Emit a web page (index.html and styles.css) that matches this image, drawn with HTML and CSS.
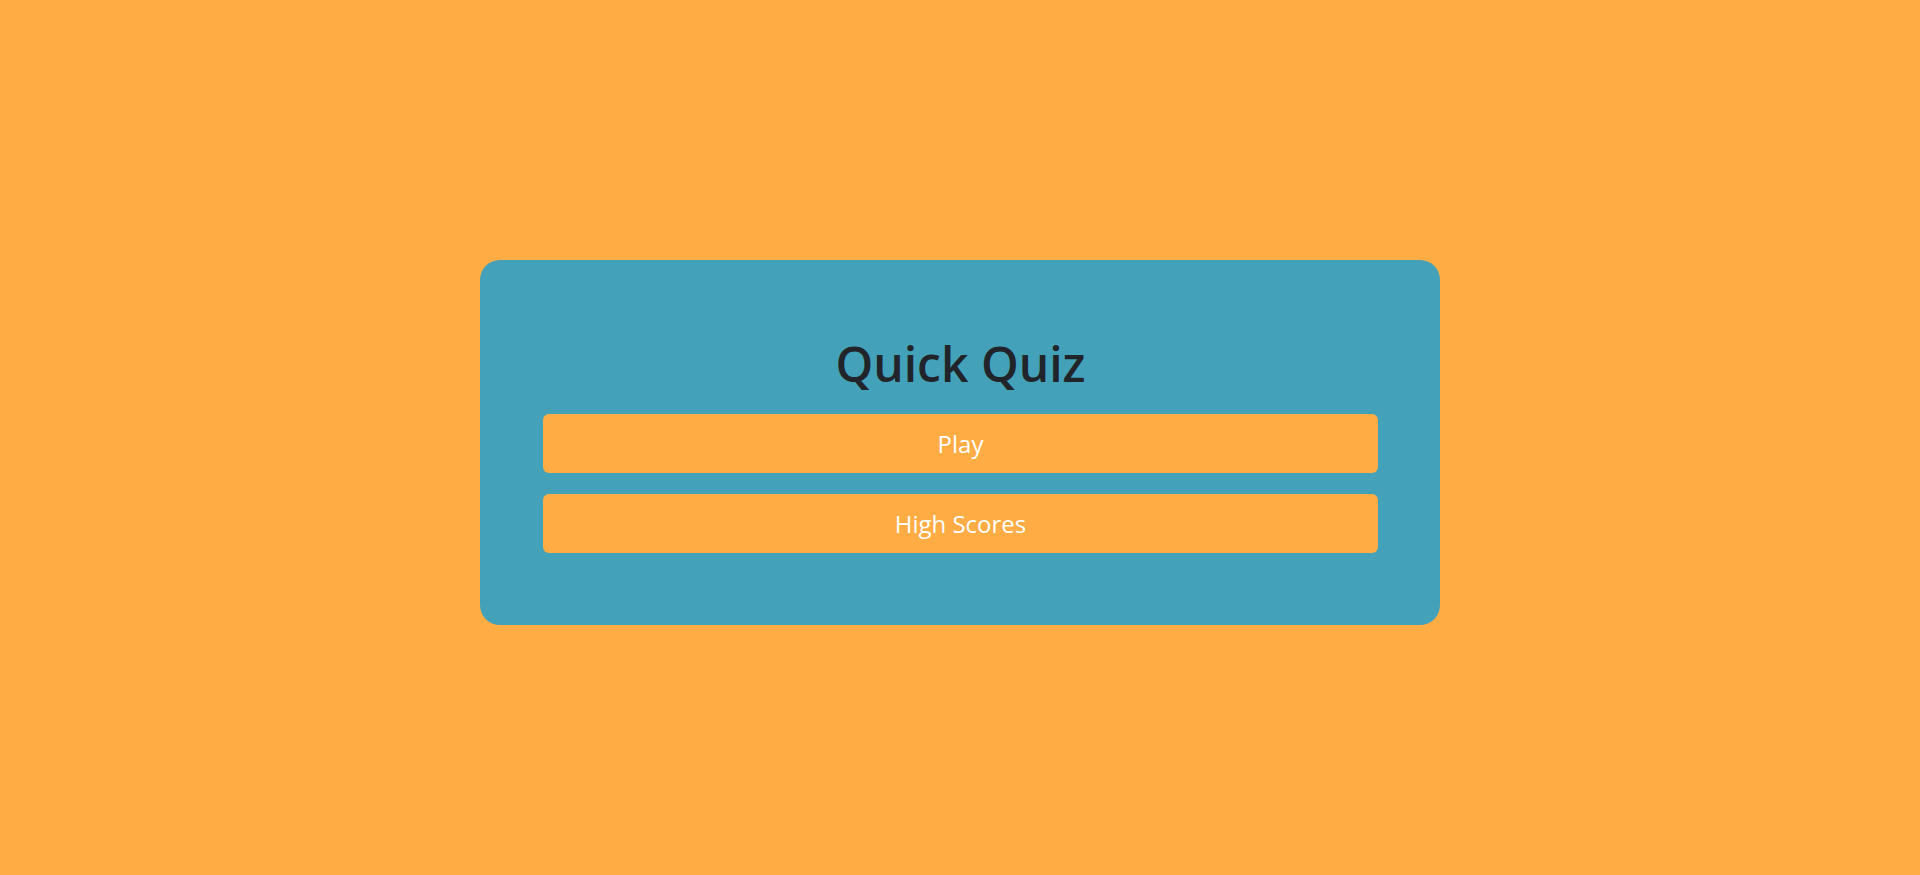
FILE: index.html
```html
<!DOCTYPE html>
<html lang="en">
<head>
<meta charset="utf-8">
<title>Quick Quiz</title>
<link rel="stylesheet" href="styles.css">
</head>
<body>
<main class="card">
  <h1 class="title">Quick Quiz</h1>
  <a class="btn" href="#">Play</a>
  <a class="btn" href="#">High Scores</a>
</main>
</body>
</html>
```

FILE: styles.css
```css
html, body {
  margin: 0;
  padding: 0;
}
body {
  background: #ffac44;
  font-family: "Open Sans", "Noto Sans", sans-serif;
  min-height: 100vh;
  box-sizing: border-box;
  padding-top: 260px;
  display: flex;
  justify-content: center;
  align-items: flex-start;
}
.card {
  width: 960px;
  box-sizing: border-box;
  background: #43a2b9;
  border-radius: 20px;
  padding: 72px 62px 72px 63px;
  display: flex;
  flex-direction: column;
  align-items: stretch;
  gap: 21px;
}
.title {
  margin: 0 0 -2px 0;
  padding-top: 1px;
  font-size: 48px;
  line-height: 62px;
  font-weight: 600;
  color: #212529;
  text-align: center;
}
.btn {
  display: flex;
  align-items: center;
  justify-content: center;
  height: 59px;
  border-radius: 6px;
  background: #ffac44;
  color: #ffffff;
  font-size: 24px;
  text-decoration: none;
}
```
